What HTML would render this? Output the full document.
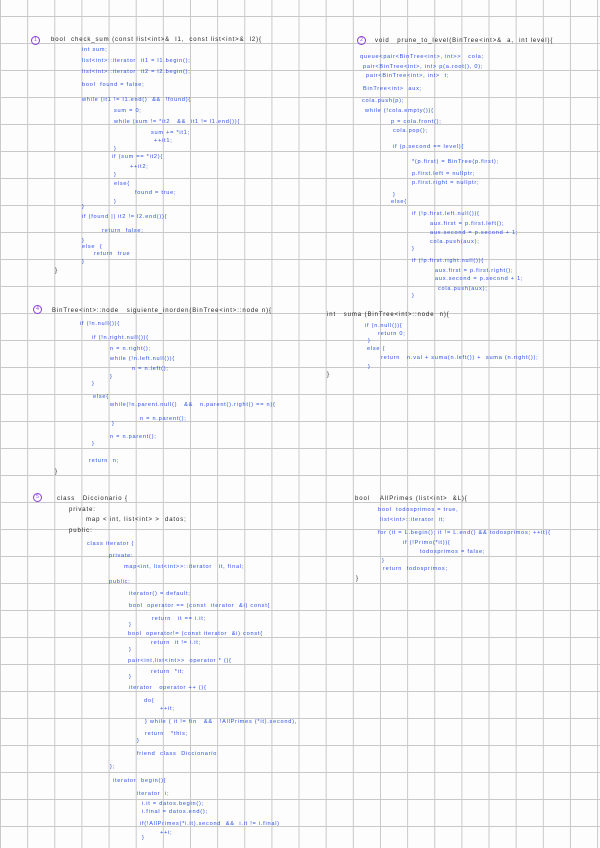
<!DOCTYPE html>
<html><head><meta charset="utf-8">
<style>
html,body{margin:0;padding:0}
body{width:600px;height:848px;position:relative;overflow:hidden;background-color:#fdfdfd;
background-image:
 linear-gradient(to right,#c9c9c9 1px,transparent 1px),
 linear-gradient(to bottom,#c9c9c9 1px,transparent 1px);
background-size:27.15px 27px,27.15px 27px;
background-position:0 0,0 16px;
font-family:"Liberation Sans",sans-serif;}
i{position:absolute;font-style:normal;font-size:5.6px;line-height:7px;white-space:pre;color:#2b4fe6;letter-spacing:0.75px;}
i.k{color:#222;font-size:6px;letter-spacing:0.9px}
b.c{position:absolute;width:7px;height:7px;border:1px solid #8a3ee0;border-radius:50%;font-size:5px;line-height:7px;text-align:center;color:#8a3ee0;font-weight:normal}
</style></head><body>

<b class="c" style="left:31px;top:36px">1</b>
<i class="k" style="left:51px;top:37px">bool  check_sum (const list&lt;int&gt;&amp;  l1,  const list&lt;int&gt;&amp;  l2){</i>
<i style="left:82px;top:47px">int sum;</i>
<i style="left:82px;top:58px">list&lt;int&gt;::iterator  it1 = l1.begin();</i>
<i style="left:82px;top:69px">list&lt;int&gt;::iterator  it2 = l2.begin();</i>
<i style="left:82px;top:82px">bool  found = false;</i>
<i style="left:82px;top:97px">while (it1 != l1.end()  &amp;&amp;  !found){</i>
<i style="left:114px;top:108px">sum = 0;</i>
<i style="left:114px;top:119px">while (sum != *it2   &amp;&amp;  it1 != l1.end()){</i>
<i style="left:151px;top:130px">sum += *it1;</i>
<i style="left:154px;top:138px">++it1;</i>
<i style="left:114px;top:146px">}</i>
<i style="left:112px;top:154px">if (sum == *it2){</i>
<i style="left:130px;top:164px">++it2;</i>
<i style="left:114px;top:172px">}</i>
<i style="left:114px;top:181px">else{</i>
<i style="left:135px;top:190px">found = true;</i>
<i style="left:114px;top:199px">}</i>
<i style="left:82px;top:204px">}</i>
<i style="left:82px;top:214px">if (found || it2 != l2.end()){</i>
<i style="left:102px;top:228px">return  false;</i>
<i style="left:82px;top:238px">}</i>
<i style="left:82px;top:244px">else  {</i>
<i style="left:94px;top:251px">return  true</i>
<i style="left:82px;top:259px">}</i>
<i class="k" style="left:55px;top:268px">}</i>

<b class="c" style="left:357px;top:36px">2</b>
<i class="k" style="left:375px;top:38px">void   prune_to_level(BinTree&lt;int&gt;&amp;  a,  int level){</i>
<i style="left:360px;top:54px">queue&lt;pair&lt;BinTree&lt;int&gt;, int&gt;&gt;   cola;</i>
<i style="left:363px;top:64px">pair&lt;BinTree&lt;int&gt;, int&gt; p(a.root(), 0);</i>
<i style="left:366px;top:73px">pair&lt;BinTree&lt;int&gt;, int&gt;  t;</i>
<i style="left:363px;top:86px">BinTree&lt;int&gt;  aux;</i>
<i style="left:362px;top:98px">cola.push(p);</i>
<i style="left:365px;top:108px">while (!cola.empty()){</i>
<i style="left:391px;top:119px">p = cola.front();</i>
<i style="left:393px;top:128px">cola.pop();</i>
<i style="left:393px;top:144px">if (p.second == level){</i>
<i style="left:412px;top:159px">*(p.first) = BinTree(p.first);</i>
<i style="left:412px;top:171px">p.first.left = nullptr;</i>
<i style="left:412px;top:180px">p.first.right = nullptr;</i>
<i style="left:393px;top:192px">}</i>
<i style="left:391px;top:199px">else{</i>
<i style="left:412px;top:211px">if (!p.first.left.null()){</i>
<i style="left:430px;top:221px">aux.first = p.first.left();</i>
<i style="left:430px;top:230px">aux.second = p.second + 1;</i>
<i style="left:430px;top:239px">cola.push(aux);</i>
<i style="left:412px;top:246px">}</i>
<i style="left:412px;top:258px">if (!p.first.right.null()){</i>
<i style="left:435px;top:268px">aux.first = p.first.right();</i>
<i style="left:435px;top:276px">aux.second = p.second + 1;</i>
<i style="left:438px;top:286px">cola.push(aux);</i>
<i style="left:412px;top:293px">}</i>

<b class="c" style="left:33px;top:305px">4</b>
<i class="k" style="left:52px;top:308px">BinTree&lt;int&gt;::node   siguiente_inorden(BinTree&lt;int&gt;::node n){</i>
<i style="left:80px;top:321px">if (!n.null()){</i>
<i style="left:92px;top:335px">if (!n.right.null()){</i>
<i style="left:110px;top:346px">n = n.right();</i>
<i style="left:110px;top:356px">while (!n.left.null()){</i>
<i style="left:132px;top:366px">n = n.left();</i>
<i style="left:110px;top:374px">}</i>
<i style="left:92px;top:381px">}</i>
<i style="left:93px;top:394px">else{</i>
<i style="left:110px;top:402px">while(!n.parent.null()   &amp;&amp;   n.parent().right() == n){</i>
<i style="left:140px;top:416px">n = n.parent();</i>
<i style="left:112px;top:421px">}</i>
<i style="left:110px;top:434px">n = n.parent();</i>
<i style="left:92px;top:441px">}</i>
<i style="left:89px;top:458px">return  n;</i>
<i class="k" style="left:55px;top:469px">}</i>

<i class="k" style="left:327px;top:312px">int   suma (BinTree&lt;int&gt;::node  n){</i>
<i style="left:365px;top:323px">if (n.null()){</i>
<i style="left:378px;top:331px">return 0;</i>
<i style="left:368px;top:338px">}</i>
<i style="left:367px;top:346px">else {</i>
<i style="left:381px;top:355px">return   n.val + suma(n.left()) +  suma (n.right());</i>
<i style="left:368px;top:364px">}</i>
<i class="k" style="left:327px;top:372px">}</i>

<b class="c" style="left:33px;top:493px">5</b>
<i class="k" style="left:57px;top:496px">class   Diccionario {</i>
<i class="k" style="left:69px;top:507px">private:</i>
<i class="k" style="left:86px;top:517px">map &lt; int, list&lt;int&gt; &gt;  datos;</i>
<i class="k" style="left:69px;top:528px">public:</i>
<i style="left:87px;top:541px">class iterator {</i>
<i style="left:109px;top:553px">private:</i>
<i style="left:124px;top:564px">map&lt;int, list&lt;int&gt;&gt;::iterator   it, final;</i>
<i style="left:109px;top:579px">public:</i>
<i style="left:129px;top:591px">iterator() = default;</i>
<i style="left:129px;top:603px">bool  operator == (const  iterator  &amp;i) const{</i>
<i style="left:152px;top:616px">return   it == i.it;</i>
<i style="left:129px;top:622px">}</i>
<i style="left:128px;top:631px">bool  operator!= (const iterator  &amp;i) const{</i>
<i style="left:151px;top:640px">return  it != i.it;</i>
<i style="left:129px;top:647px">}</i>
<i style="left:128px;top:658px">pair&lt;int,list&lt;int&gt;&gt;  operator * (){</i>
<i style="left:151px;top:669px">return  *it;</i>
<i style="left:129px;top:674px">}</i>
<i style="left:129px;top:685px">iterator   operator ++ (){</i>
<i style="left:144px;top:698px">do{</i>
<i style="left:160px;top:706px">++it;</i>
<i style="left:145px;top:719px">} while ( it != fin   &amp;&amp;   !AllPrimes (*it).second),</i>
<i style="left:145px;top:731px">return   *this;</i>
<i style="left:137px;top:738px">}</i>
<i style="left:137px;top:751px">friend  class  Diccionario</i>
<i style="left:110px;top:764px">};</i>
<i style="left:113px;top:778px">iterator  begin(){</i>
<i style="left:137px;top:791px">iterator  i;</i>
<i style="left:142px;top:801px">i.it = datos.begin();</i>
<i style="left:142px;top:809px">i.final = datos.end();</i>
<i style="left:140px;top:821px">if(!AllPrimes(*i.it).second  &amp;&amp;  i.it != i.final)</i>
<i style="left:160px;top:830px">++i;</i>
<i style="left:142px;top:835px">}</i>

<i class="k" style="left:355px;top:496px">bool    AllPrimes (list&lt;int&gt;  &amp;L){</i>
<i style="left:378px;top:507px">bool  todosprimos = true,</i>
<i style="left:380px;top:517px">list&lt;int&gt;::iterator  it;</i>
<i style="left:378px;top:530px">for (it = L.begin(); it != L.end() &amp;&amp; todosprimos; ++it){</i>
<i style="left:403px;top:540px">if (!Primo(*it)){</i>
<i style="left:420px;top:549px">todosprimos = false;</i>
<i style="left:382px;top:558px">}</i>
<i style="left:383px;top:566px">return  todosprimos;</i>
<i class="k" style="left:356px;top:576px">}</i>
</body></html>
